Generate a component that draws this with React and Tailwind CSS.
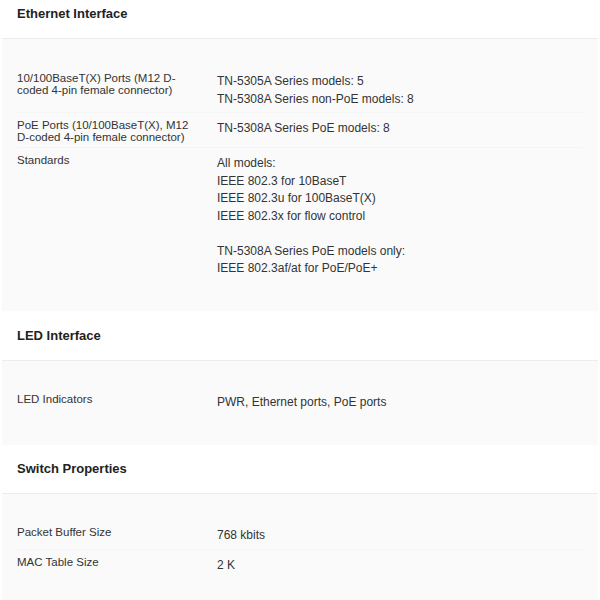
import React from "react";

const font = { fontFamily: '"Liberation Sans", Arial, sans-serif' };

function Row({ label, values, first }) {
  return (
    <div className={`grid grid-cols-[200px_1fr] pt-[6px] pb-[4px] ${first ? "" : "border-t border-[#f5f5f5]"}`}>
      <div className="w-[175px] text-[11.5px] leading-[12px] text-[#333]">{label}</div>
      <div className="pt-[1px] text-[12px] leading-[17.5px] text-[#333]">
        {values.map((v, i) => (
          <div key={i} className={v === "" ? "h-[17.5px]" : ""}>{v}</div>
        ))}
      </div>
    </div>
  );
}

function Section({ title, rows, headClass, bodyClass }) {
  return (
    <div>
      <div className={`bg-white px-[17px] text-[13px] font-bold text-[#222] ${headClass}`}>{title}</div>
      <div className={`mx-[2px] bg-[#fafafa] border-t border-[#ececec] px-[15px] ${bodyClass}`}>
        {rows.map((r, i) => (
          <Row key={i} first={i === 0} label={r[0]} values={r[1]} />
        ))}
      </div>
    </div>
  );
}

export default function App() {
  return (
    <div style={font} className="w-[600px] h-[600px] overflow-hidden bg-white">
      <Section
        title="Ethernet Interface"
        headClass="h-[38px] pt-[6px] leading-[16px]"
        bodyClass="pt-[27px] pb-[29px]"
        rows={[
          ["10/100BaseT(X) Ports (M12 D-coded 4-pin female connector)", ["TN-5305A Series models: 5", "TN-5308A Series non-PoE models: 8"]],
          ["PoE Ports (10/100BaseT(X), M12 D-coded 4-pin female connector)", ["TN-5308A Series PoE models: 8"]],
          ["Standards", ["All models:", "IEEE 802.3 for 10BaseT", "IEEE 802.3u for 100BaseT(X)", "IEEE 802.3x for flow control", "", "TN-5308A Series PoE models only:", "IEEE 802.3af/at for PoE/PoE+"]],
        ]}
      />
      <Section
        title="LED Interface"
        headClass="h-[49px] pt-[17px] leading-[16px]"
        bodyClass="pt-[26px] pb-[30px]"
        rows={[["LED Indicators", ["PWR, Ethernet ports, PoE ports"]]]}
      />
      <Section
        title="Switch Properties"
        headClass="h-[48px] pt-[16px] leading-[16px]"
        bodyClass="pt-[26px] pb-[40px]"
        rows={[
          ["Packet Buffer Size", ["768 kbits"]],
          ["MAC Table Size", ["2 K"]],
        ]}
      />
    </div>
  );
}
